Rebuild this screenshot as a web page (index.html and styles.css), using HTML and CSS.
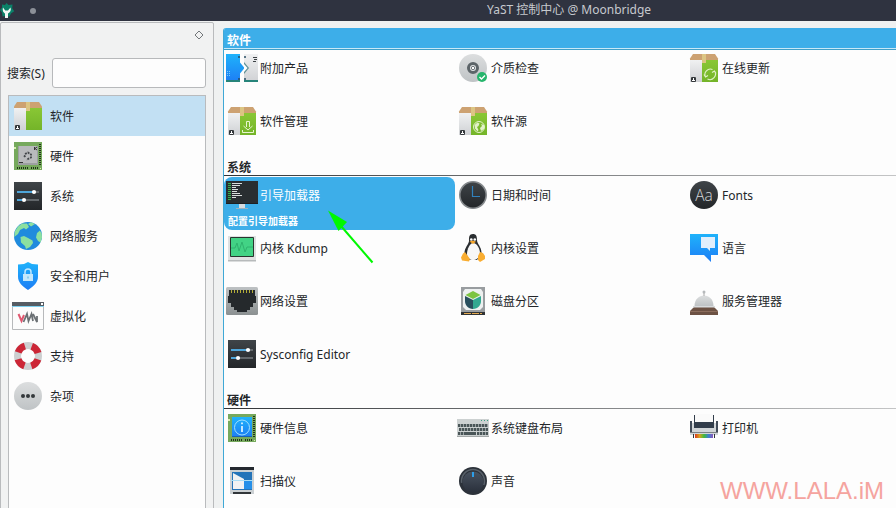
FILE: index.html
```html
<!DOCTYPE html>
<html lang="zh-CN">
<head>
<meta charset="utf-8">
<title>YaST 控制中心 @ Moonbridge</title>
<link rel="stylesheet" href="styles.css">
</head>
<body>
<svg class="defs" width="0" height="0" aria-hidden="true">
  <defs>
    <linearGradient id="gDark" x1="0" y1="0" x2="0" y2="1"><stop offset="0" stop-color="#3f4448"/><stop offset="1" stop-color="#232629"/></linearGradient>
    <linearGradient id="gWhite" x1="0" y1="0" x2="0" y2="1"><stop offset="0" stop-color="#f0f1f2"/><stop offset="1" stop-color="#cfd1d4"/></linearGradient>
    <linearGradient id="gGreen" x1="0" y1="0" x2="0" y2="1"><stop offset="0" stop-color="#89c735"/><stop offset="1" stop-color="#74b429"/></linearGradient>
    <linearGradient id="gBlue" x1="0" y1="0" x2="0" y2="1"><stop offset="0" stop-color="#1fb3fb"/><stop offset="1" stop-color="#1d7df5"/></linearGradient>
    <linearGradient id="gGray" x1="0" y1="0" x2="0" y2="1"><stop offset="0" stop-color="#dcdedf"/><stop offset="1" stop-color="#bfc3c5"/></linearGradient>
    <linearGradient id="gKnob" x1="0" y1="0" x2="0" y2="1"><stop offset="0" stop-color="#48525f"/><stop offset="1" stop-color="#2a303b"/></linearGradient>
    <linearGradient id="gPort" x1="0" y1="0" x2="0" y2="1"><stop offset="0" stop-color="#bdc1c3"/><stop offset="1" stop-color="#8b9091"/></linearGradient>
    <linearGradient id="gRain" x1="0" y1="0" x2="1" y2="0"><stop offset="0" stop-color="#d93a22"/><stop offset=".25" stop-color="#d9a21f"/><stop offset=".5" stop-color="#3fbb3a"/><stop offset=".75" stop-color="#3c7fd0"/><stop offset="1" stop-color="#8b57b8"/></linearGradient>
  </defs>
  <symbol id="box" viewBox="0 0 32 32">
    <path d="M2 8h12v22H2z" fill="url(#gWhite)"/><path d="M14 8h16v22H14z" fill="url(#gGreen)"/>
    <path d="M5 2h22l3 4.500v1.500H2V6.500z" fill="#cda272"/><path d="M14 2h4v9h-4z" fill="#dcc583"/>
    <path d="M3.500 25.500h4v4h-4z" fill="#fff" stroke="#34383b"/><path d="M4 26h1v2H4zM6 26h1v2H6z" fill="#34383b"/>
  </symbol>
  <symbol id="box-down" viewBox="0 0 32 32">
    <use href="#box"/><path d="M20.500 22v-5.500h3V22M17.500 21l4.500 4 4.500-4M16.500 25v2.500h11V25" fill="none" stroke="#e8f5d0"/>
  </symbol>
  <symbol id="box-sync" viewBox="0 0 32 32">
    <use href="#box"/><path d="M17.500 25a5.500 5.500 0 0 1 7-7.500M26.500 19a5.500 5.500 0 0 1-7 8M16 22.500l1.500 2.500 2.500-1.500M28 21.500l-1.500-2.500-2.500 1.500" fill="none" stroke="#e2f2c8" stroke-width="1.100"/>
  </symbol>
  <symbol id="box-web" viewBox="0 0 32 32">
    <use href="#box"/><circle cx="22" cy="22" r="5.500" fill="none" stroke="#e2f2c8"/><path d="M17.500 20l3-2.500 2 1-1 2.500-1.500 1 1.500 3-1 1.500-2.500-3zM24 19l3 1v4l-3 2-1-3 2-2z" fill="#e2f2c8"/>
  </symbol>
  <symbol id="chip" viewBox="0 0 32 32">
    <path d="M2 2h28v28H2z" fill="#76a95d"/><path d="M28 4v21" stroke="#1f3318" stroke-width="2" stroke-dasharray="1 1"/><path d="M5 28h12M19 28h8" stroke="#1f3318" stroke-width="2" stroke-dasharray="1 1"/><path d="M2 7h2v2H2zM28 28h1v1h-1z" fill="#dceeb6"/>
  </symbol>
  <symbol id="hardware" viewBox="0 0 32 32">
    <use href="#chip"/><path d="M6 6h20v19H6z" fill="#9da0a2"/><path d="M7 6h18v17H7z" fill="#b8babc"/>
    <path d="M13 14l3-1.500 3 2v3l-3 1.500-1.500 1M12 15.500l1.500 1.500" fill="none" stroke="#424649" stroke-width="1.800" stroke-dasharray="2 1"/><path d="M22.500 7v3M25 7l-2 1.500 2 1.500M7 22.500h4" fill="none" stroke="#333"/>
  </symbol>
  <symbol id="info" viewBox="0 0 32 32">
    <use href="#chip"/><path d="M6 5h20v20H6z" fill="url(#gBlue)"/><path d="M6 24h20v1H6z" fill="#1861b5"/><circle cx="16" cy="15.500" r="7.500" fill="none" stroke="#9fe0ff"/><path d="M16 14v6M16 10.500v1.700" stroke="#d7f2ff" stroke-width="1.800"/>
  </symbol>
  <symbol id="sliders" viewBox="0 0 32 32">
    <path d="M2 2h28v28H2z" fill="url(#gDark)"/><path d="M5 12h17M5 20h5" stroke="#4ea5d9" stroke-width="2"/><path d="M22 12h5M12 20h15" stroke="#62676b" stroke-width="2"/><circle cx="22" cy="12" r="2.100" fill="#fff"/><circle cx="12" cy="20" r="2.100" fill="#fff"/>
  </symbol>
  <symbol id="globe" viewBox="0 0 32 32">
    <circle cx="16" cy="16" r="14" fill="#208bdd"/>
    <path d="M10 3.500L6 6.500 3 11l-.8 6L6 14l2-4 4-2 2 1.500 3-2.500-2-3.500zM16 4l3 2.500 4-2.500-4-1.700zM8.500 17l3.500-1 4 2 4.500 2.500.5 2.500-3 4-4 2-1-3-4-3.500zM25 13l3-2.500 1.700 3 .3 4-1.500 5L26 21l-2-3.500z" fill="#8ce0a0"/>
  </symbol>
  <symbol id="shield" viewBox="0 0 32 32">
    <path d="M16 2l4 2 6 .5v12c0 6-4 9.500-10 13.500C10 26 6 22.500 6 16.500v-12L12 4z" fill="url(#gBlue)"/><path d="M11 14h10v7H11z" fill="#c4e7fb"/><path d="M13 14v-2a3 3 0 0 1 6 0v2" fill="none" stroke="#bfe8ff" stroke-width="1.500"/><path d="M16 16.500v2" stroke="#52afe4"/>
  </symbol>
  <symbol id="vm" viewBox="0 0 32 32">
    <path d="M.5 3.500h31v26H.5z" fill="#fcfcfc" stroke="#b7b9bb"/><path d="M0 2h32v4H0z" fill="#565c63"/><path d="M0 6h32v1H0z" fill="#7ed0ef"/><path d="M29 3h2v2h-2z" fill="#fff"/>
    <path d="M6.500 14l3 7 2.500-6" fill="none" stroke="#e05870" stroke-width="2"/><path d="M11.500 22l3.500-8 1.500 7 3-7 1.500 7M21 14l4 8v-6" fill="none" stroke="#6b7074" stroke-width="1.800"/>
  </symbol>
  <symbol id="lifebuoy" viewBox="0 0 32 32">
    <circle cx="16" cy="16" r="10.500" fill="none" stroke="#cdcfd0" stroke-width="7"/><circle cx="16" cy="16" r="10.500" fill="none" stroke="#cc2636" stroke-width="7" stroke-dasharray="9.500 6.993" stroke-dashoffset="-3.500"/>
  </symbol>
  <symbol id="dots" viewBox="0 0 32 32">
    <circle cx="16" cy="16" r="14" fill="url(#gGray)"/><g fill="#34393c"><circle cx="11" cy="16" r="2"/><circle cx="16" cy="16" r="2"/><circle cx="21" cy="16" r="2"/></g>
  </symbol>
  <symbol id="addon" viewBox="0 0 32 32">
    <path d="M0 2h14v28H0z" fill="url(#gBlue)"/><path d="M18 2h14v28H18z" fill="url(#gWhite)"/><path d="M14 10.500v11l4.500-5.500z" fill="#1d9cf4"/><path d="M18 10l5 6-5 6" fill="#5f8f95"/><path d="M18 12l3.500 4-3.500 4z" fill="#fff"/>
    <path d="M0 29h14M18 29h14" stroke="#27847a" stroke-width="2"/><path d="M13 4v2M13 26v2M19 4v2M19 26v2" stroke="#294d63" stroke-width="1.500"/><path d="M27 5.500h4M28 7.500h3M27 9.500h3" stroke="#3d4245"/><path d="M1.500 19v5M3.500 19v5" stroke="#79c9f9" stroke-dasharray="1 1"/>
  </symbol>
  <symbol id="disc" viewBox="0 0 32 32">
    <circle cx="16" cy="16" r="14" fill="url(#gGray)"/><circle cx="16" cy="16" r="4.500" fill="#e5e7e8" stroke="#5c6468" stroke-width="3"/><circle cx="16" cy="16" r="1.700" fill="#fff" stroke="#70777b"/><circle cx="25" cy="25" r="5" fill="#26b56c"/><path d="M22.500 25l2 2 3.500-3.500" fill="none" stroke="#fff" stroke-width="1.400"/>
  </symbol>
  <symbol id="boot" viewBox="0 0 32 32">
    <path d="M0 2h32v23H0z" fill="#292e31"/><path d="M0 24h32v1H0z" fill="#1d2023"/><path d="M13 25h6v4h-6z" fill="#d7dcdf"/><path d="M10 29.500h12" stroke="#9eb2bf"/>
    <path d="M3.500 4v17" stroke="#34b54b" stroke-width="3" stroke-dasharray="1 1"/><path d="M6 4.500h10M6 6.500h8M6 8.500h4M6 10.500h6M6 12.500h5M6 14.500h8M6 16.500h10M6 18.500h4" stroke="#dadede"/>
  </symbol>
  <symbol id="clock" viewBox="0 0 32 32">
    <circle cx="16" cy="16" r="13.200" fill="url(#gDark)" stroke="#85898c" stroke-width="1.600"/><path d="M15.500 7v10.500H23" fill="none" stroke="#3182bd" stroke-width="1.200"/>
  </symbol>
  <symbol id="kdump" viewBox="0 0 32 32">
    <path d="M2 4h28v25H2z" fill="#dfe1e2"/><path d="M2 28h28v1.500H2z" fill="#b7babb"/><path d="M4.500 5.500h23v19h-23z" fill="#42d385" stroke="#29352f"/><path d="M5 16h4l2-5 2 8 3-9 3 10 2-5h6" fill="none" stroke="#2fb36e"/>
  </symbol>
  <symbol id="tux" viewBox="0 0 32 32">
    <path d="M16 2c-4 0-4 3-4 7 0 3-5 7-4.500 13L12 28h8l4.500-6C25 15 20 12 20 8c0-4-1-6-4-6z" fill="#2b2e31"/><path d="M16 11c-3 0-6 6-6 11 0 4 3 6 6 6s7-2 7-7c0-4-3-10-7-10z" fill="#f7f7f7"/>
    <circle cx="14.300" cy="7.500" r="1.300" fill="#fff"/><circle cx="17.800" cy="7.500" r="1.300" fill="#fff"/><path d="M12.500 9.500l3.500-1 3 1.200-3 2.300z" fill="#f5a62c"/>
    <path d="M8 20l5 7-1 2.500-7-1-1-3 2-4zM23 20l-2 4v4l2 2 5-3v-3l-2-3z" fill="#f9ad31"/>
  </symbol>
  <symbol id="lang" viewBox="0 0 32 32">
    <path d="M2 2h28v21h-7v7l-7-7H2z" fill="url(#gBlue)"/><path d="M13 5h14v11h-5v3l-3-3h-6z" fill="#e2effc"/>
  </symbol>
  <symbol id="net" viewBox="0 0 32 32">
    <rect y="2" width="32" height="28" rx="1.500" fill="url(#gPort)"/><path d="M3 5h26v6h1v7h-3v4h-3v3h-3v2H11v-2H8v-3H5v-4H2v-7h1z" fill="#25292c"/><path d="M5 6.500h23" stroke="#b4ad38" stroke-width="3" stroke-dasharray="1 2"/>
  </symbol>
  <symbol id="disk" viewBox="0 0 32 32">
    <path d="M4 2h24v28H4z" fill="#999da0"/><path d="M8 4h16l2 3v15l-3 3H9l-3-3V7z" fill="#edf0f0"/><path d="M16 6l7.500 4-7.500 4-7.500-4z" fill="#7cc441"/><path d="M8 11l8 4v9c-5 0-8-4-8-8z" fill="#284f5d"/><path d="M24 11l-8 4v9c5 0 8-4 8-8z" fill="#31a890"/>
    <path d="M4 27h24v3H4z" fill="#303335"/><path d="M7 28.500h18" stroke="#e3aa51" stroke-dasharray="7 1"/>
  </symbol>
  <symbol id="bell" viewBox="0 0 32 32">
    <path d="M2 26l4-4h20l4 4v4H2z" fill="#6d5244"/><path d="M2 26h28v1H2z" fill="#8c6d5c"/><path d="M6.500 21c0-14 19-14 19 0z" fill="url(#gGray)"/><path d="M5 21h22v1.500H5z" fill="#d8dbdd"/><circle cx="16" cy="7" r="1.500" fill="#b6b9bb"/><path d="M16 8v3" stroke="#aaa"/>
  </symbol>
  <symbol id="keyboard" viewBox="0 0 32 32">
    <path d="M0 7h32v18H0z" fill="#ccd1d1"/><path d="M0 24h32v1H0z" fill="#a2a7a7"/><path d="M24 8.500h7" stroke="#3ba082" stroke-dasharray="1 2"/><path d="M1 13.500h30M1 21.500h8M20 21.500h11" stroke="#4a5658" stroke-width="3" stroke-dasharray="2.400 .6"/><path d="M2 17.500h29" stroke="#4a5658" stroke-width="3" stroke-dasharray="2.400 .6"/><path d="M9 21.500h10" stroke="#4a5658" stroke-width="3"/><path d="M1 15.500h30M1 19.500h30" stroke="#ccd1d1"/>
  </symbol>
  <symbol id="printer" viewBox="0 0 32 32">
    <path d="M2 11h28v12H2z" fill="#d1d5d8"/><path d="M2 9h2v12H2zM28 9h2v12h-2z" fill="#424c59"/><path d="M6 3h20v13H6z" fill="#323d4b"/><path d="M7 2h18v8H7z" fill="#fafafa"/><path d="M2 20h28v1H2z" fill="#7b8185"/><path d="M5 22h1v4H5zM26 22h1v4h-1z" fill="#30343a"/><path d="M7 22h18v4H7z" fill="url(#gRain)"/>
  </symbol>
  <symbol id="scanner" viewBox="0 0 32 32">
    <path d="M4 5h24v24H4z" fill="#cbd0d3"/><path d="M4 2h24v3H4z" fill="#24292f"/><path d="M6 7h20v18H6z" fill="#2474b9"/><path d="M18 15h8v9h-8z" fill="#2590e9"/><path d="M7 8l11 6v10H7z" fill="#f1f2f3"/><path d="M5 15.500h22" stroke="#a9def6"/><path d="M7 28h18" stroke="#31363a" stroke-width="2"/>
  </symbol>
  <symbol id="sound" viewBox="0 0 32 32">
    <circle cx="16" cy="16" r="14" fill="#2c323a"/><circle cx="16" cy="16" r="11.500" fill="none" stroke="#59616a" stroke-width="1.500" stroke-dasharray="43 30" stroke-dashoffset="39"/><circle cx="16" cy="17" r="10.500" fill="url(#gKnob)"/><path d="M16 7v5" stroke="#2d9ee8" stroke-width="2"/>
  </symbol>
</svg>

<header class="titlebar">
  <svg class="logo" viewBox="0 0 16 16"><path d="M7.500 0l2 2 4-.5-.3 3.800 2 3-3 2-2 3.500-3-1-3.600.7-.6-4L1 7l2-2.500V1.500l3 .5z" fill="#0b8068"/><path d="M4 4.500C3 8 5 10 6 10.500V15h3v-4.500c2-1 3.500-3 2.500-6L9 7.500H6.200z" fill="#f4f8f6"/></svg>
  <span class="dot"></span>
  <h1>YaST 控制中心 @ Moonbridge</h1>
</header>

<div class="window">
  <aside class="sidebar">
    <div class="dock"><svg width="10" height="10" viewBox="0 0 10 10"><path d="M5 1l4 4-4 4-4-4z" fill="none" stroke="#73777a"/></svg></div>
    <label class="search"><span>搜索(S)</span><input type="text"></label>
    <nav class="groups">
      <a class="group current"><svg><use href="#box"/></svg><span>软件</span></a>
      <a class="group"><svg><use href="#hardware"/></svg><span>硬件</span></a>
      <a class="group"><svg><use href="#sliders"/></svg><span>系统</span></a>
      <a class="group"><svg><use href="#globe"/></svg><span>网络服务</span></a>
      <a class="group"><svg><use href="#shield"/></svg><span>安全和用户</span></a>
      <a class="group"><svg><use href="#vm"/></svg><span>虚拟化</span></a>
      <a class="group"><svg><use href="#lifebuoy"/></svg><span>支持</span></a>
      <a class="group"><svg><use href="#dots"/></svg><span>杂项</span></a>
    </nav>
  </aside>

  <main class="modules">
    <h2 class="active">软件</h2>
    <div class="grid">
      <a class="item"><svg><use href="#addon"/></svg><span>附加产品</span></a>
      <a class="item"><svg><use href="#disc"/></svg><span>介质检查</span></a>
      <a class="item"><svg><use href="#box-sync"/></svg><span>在线更新</span></a>
      <a class="item"><svg><use href="#box-down"/></svg><span>软件管理</span></a>
      <a class="item"><svg><use href="#box-web"/></svg><span>软件源</span></a>
    </div>
    <h2>系统</h2>
    <div class="grid">
      <a class="item selected"><svg><use href="#boot"/></svg><span>引导加载器</span><small>配置引导加载器</small></a>
      <a class="item"><svg><use href="#clock"/></svg><span>日期和时间</span></a>
      <a class="item"><svg viewBox="0 0 32 32"><circle cx="16" cy="16" r="14" fill="url(#gDark)"/><text class="aa" x="16" y="21.500" text-anchor="middle">Aa</text></svg><span>Fonts</span></a>
      <a class="item"><svg><use href="#kdump"/></svg><span>内核 Kdump</span></a>
      <a class="item"><svg><use href="#tux"/></svg><span>内核设置</span></a>
      <a class="item"><svg><use href="#lang"/></svg><span>语言</span></a>
      <a class="item"><svg><use href="#net"/></svg><span>网络设置</span></a>
      <a class="item"><svg><use href="#disk"/></svg><span>磁盘分区</span></a>
      <a class="item"><svg><use href="#bell"/></svg><span>服务管理器</span></a>
      <a class="item"><svg><use href="#sliders"/></svg><span>Sysconfig Editor</span></a>
    </div>
    <h2>硬件</h2>
    <div class="grid">
      <a class="item"><svg><use href="#info"/></svg><span>硬件信息</span></a>
      <a class="item"><svg><use href="#keyboard"/></svg><span>系统键盘布局</span></a>
      <a class="item"><svg><use href="#printer"/></svg><span>打印机</span></a>
      <a class="item"><svg><use href="#scanner"/></svg><span>扫描仪</span></a>
      <a class="item"><svg><use href="#sound"/></svg><span>声音</span></a>
    </div>
  </main>
</div>

<svg class="pointer" viewBox="0 0 48 56"><path d="M14 17l31.500 36.500" stroke="#00f800" stroke-width="2"/><path d="M1 1.500l19 11.500-8.500 9z" fill="#00f800"/></svg>
<div class="watermark">WWW.LALA.iM</div>
</body>
</html>
```
FILE: styles.css
```css
* { box-sizing: border-box; }

body {
  margin: 0;
  height: 508px;
  overflow: hidden;
  display: flex;
  flex-direction: column;
  background: #eff1f1;
  color: #232629;
  font: 12px/18px "Noto Sans", "Noto Sans CJK SC", sans-serif;
}

.defs { position: absolute; }

.titlebar {
  flex: none;
  height: 21px;
  display: flex;
  align-items: center;
  background: #2f3340;
  color: #c6c9ce;
}
.logo { width: 16px; height: 16px; margin: 1px 0 0 -1px; }
.dot { width: 6px; height: 6px; margin-left: 15px; border-radius: 50%; background: #8c9098; }
.titlebar h1 { margin: -2px 0 0 451px; font-size: 12px; font-weight: 400; white-space: nowrap; }

.window { flex: 1; min-height: 0; display: flex; gap: 9px; padding-top: 1px; }

.sidebar {
  width: 214px;
  height: 500px;
  flex: none;
  display: flex;
  flex-direction: column;
  border: 1px solid #b9bbbd;
  border-radius: 2px 2px 0 0;
  background: #f1f2f2;
}
.dock { height: 35px; padding: 7px 9px 0 0; text-align: right; line-height: 10px; }
.search { height: 30px; padding: 0 7px 0 6px; display: flex; align-items: center; justify-content: space-between; }
.search span { padding-top: 2px; }
.search input {
  width: 154px;
  height: 30px;
  padding: 0 6px;
  border: 1px solid #b7b9bb;
  border-radius: 3px;
  background: #fdfdfd;
  font: inherit;
}
.groups { flex: 1; margin: 7px 7px 0; border: 1px solid #b9bbbd; border-bottom: 0; background: #fdfdfd; }
.group { height: 40px; padding-left: 3px; display: flex; align-items: center; gap: 6px; }
.group.current { background: #c2e0f3; }
.group svg { width: 32px; height: 32px; }
.group span { padding-top: 2px; }

.modules {
  flex: 1;
  min-width: 0;
  height: 486px;
  margin-top: 6px;
  overflow: hidden;
  border-left: 1px solid #3fa8d6;
  border-radius: 3px 0 0 0;
  background: #fdfdfd;
}
.modules h2 {
  height: 21px;
  margin: 0;
  padding: 3px 0 0 3px;
  background: linear-gradient(90deg, #303336, #c4c5c6) 0 19px / 100% 1px no-repeat;
  font-size: 12px;
  font-weight: 700;
  line-height: 18px;
}
.modules h2.active {
  height: 22px;
  padding-top: 4px;
  background: linear-gradient(#3daee9 20px, #c8e9f8 20px 21px, #3f9fc8 21px);
  color: #fff;
}
.grid { display: grid; grid-template-columns: repeat(3, 231px); grid-auto-rows: 53px; }
.item {
  display: grid;
  grid-template: 36px 17px / 32px 1fr;
  column-gap: 2px;
  align-items: center;
  padding-left: 2px;
}
.item svg { width: 32px; height: 32px; }
.item span { padding-top: 2px; }
.item.selected { border-radius: 8px; background: #3daee9; color: #fff; }
.item small { grid-column: 1 / -1; padding: 1px 0 0 2px; align-self: start; font-size: 10px; font-weight: 700; line-height: 15px; }
.aa { fill: #d4d7d9; font: 300 15.5px "Open Sans", "Noto Sans", sans-serif; }

.pointer { position: absolute; left: 327px; top: 209px; width: 48px; height: 56px; }
.watermark {
  position: absolute;
  right: 12px;
  bottom: 3px;
  color: #f5a49f;
  font: 24px/28px "Liberation Sans", sans-serif;
}
```
